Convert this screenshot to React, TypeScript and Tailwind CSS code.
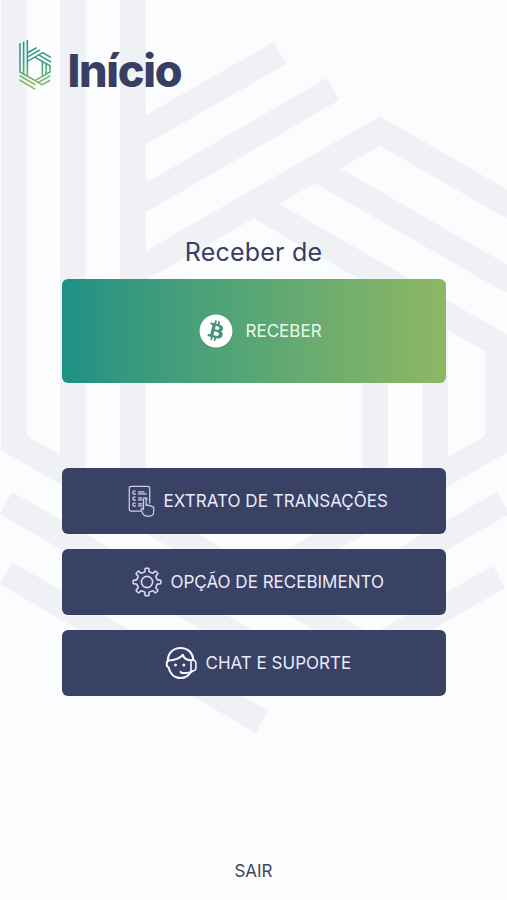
import type { ReactNode } from "react";
import { FaBitcoin } from "react-icons/fa";

// Brand mark, shared by the header logo and the page watermark
const MARK_PATHS = [
  "M14 -20V443L372 649",
  "M73 -45V476",
  "M133 -70V511",
  "M133 137L280 53",
  "M133 205L333 89",
  "M133 273L380 131L512 207",
  "M322 172.5L512 282",
  "M260 207.5L498 344V443L256 582",
  "M375 273V513",
  "M435 308V478",
  "M6 503L262 650",
  "M6 573L262 722",
  "M503 503L310 613",
  "M499 577L372 649",
];

function Mark({ stroke, width }: { stroke: string; width: number }) {
  return (
    <g fill="none" stroke={stroke} strokeWidth={width}>
      {MARK_PATHS.map((d) => (
        <path key={d} d={d} />
      ))}
    </g>
  );
}

function Logo() {
  return (
    <svg className="w-[34px] h-[52px] shrink-0" viewBox="-18 -88 548 838">
      <defs>
        <linearGradient id="logo" gradientUnits="userSpaceOnUse" x1="0" y1="-70" x2="0" y2="730">
          <stop offset="0" stopColor="#2b8f95" />
          <stop offset="0.5" stopColor="#43a085" />
          <stop offset="1" stopColor="#a3c255" />
        </linearGradient>
      </defs>
      <Mark stroke="url(#logo)" width={25} />
    </svg>
  );
}

function StatementIcon() {
  return (
    <svg
      className="w-[27px] h-8 shrink-0"
      viewBox="0 0 27 32"
      fill="none"
      stroke="#c9cee8"
      strokeWidth="1.25"
      strokeLinecap="round"
      strokeLinejoin="round"
    >
      <path d="M12.5 26H3a1.7 1.7 0 0 1-1.7-1.7V3A1.7 1.7 0 0 1 3 1.3h17A1.7 1.7 0 0 1 21.7 3v15" />
      <path d="M7.2 6.2a1.6 1.6 0 1 0 .3 2.6M7.2 12.2a1.6 1.6 0 1 0 .3 2.6M7.2 18.2a1.6 1.6 0 1 0 .3 2.6" />
      <path d="M10.5 6.8h5.5M10.5 8.9h7.8M10.5 12.8h3.5M10.5 14.9h3.5M10.5 18.8h3.5M10.5 20.9h3.5M18.8 12.8v2" />
      <path d="M15.5 24.5V14.2a1.3 1.3 0 0 1 2.6 0v6.2c1-.8 2.3-.5 2.7.4 1-.6 2.2-.2 2.5.7 1.4-.4 2.4.4 2.4 1.8v3.2c0 2.8-1.5 4.5-4 4.5h-2.8c-2 0-3.3-.9-4.1-2.6l-1.5-3.3c-.6-1.6 1.1-2.5 2.2-.6Z" />
    </svg>
  );
}

// Eight teeth, each described as [degrees from its centre, radius]
const TOOTH = [
  [-13.5, 10.4],
  [-9.8, 11.1],
  [-9, 13.1],
  [-6, 13.9],
  [6, 13.9],
  [9, 13.1],
  [9.8, 11.1],
  [13.5, 10.4],
];

function gearPath() {
  const points: string[] = [];
  for (let i = 0; i < 8; i++) {
    for (const [offset, r] of TOOTH) {
      const a = ((i * 45 + offset) * Math.PI) / 180;
      points.push(`${(r * Math.sin(a)).toFixed(2)} ${(-r * Math.cos(a)).toFixed(2)}`);
    }
  }
  return `M${points.join("L")}Z`;
}

function GearIcon() {
  return (
    <svg
      className="w-[30px] h-[30px] shrink-0"
      viewBox="-15 -15 30 30"
      fill="none"
      stroke="#d5daf0"
      strokeWidth="1.6"
      strokeLinejoin="round"
    >
      <path d={gearPath()} />
      <circle r="5.6" />
    </svg>
  );
}

function SupportIcon() {
  return (
    <svg
      className="w-8 h-[34px] shrink-0"
      viewBox="0 0 32 34"
      fill="none"
      stroke="#f4f5fd"
      strokeWidth="2.1"
      strokeLinecap="round"
      strokeLinejoin="round"
    >
      <path d="M2.8 15C2.8 7 8.2 2 15.5 2S28 7 28.2 14" />
      <path d="M3.5 14.5C9 14.3 14.5 12.8 17.8 8.8C18.8 11.8 21.5 14 26 14.3" />
      <path d="M3.3 14.5C1 16 1 20.5 3.6 21.5C5 28 9.5 32 15.5 32C20 32 24 29.5 26 25.5" />
      <path d="M26 14.3h2.3c1.8 0 2.6 1.2 2.6 3v4.4c0 1.8-1 3-2.8 3H26Z" strokeWidth="1.6" />
      <path d="M27.5 25c-1.3 1.6-3 2-5.5 2h-4.5c-1 0-1.8-.6-1.8-1.3" />
      <circle cx="10.5" cy="19" r="1.5" fill="#f4f5fd" stroke="none" />
      <circle cx="18.8" cy="19" r="1.5" fill="#f4f5fd" stroke="none" />
    </svg>
  );
}

function MenuButton({ icon, className, children }: { icon: ReactNode; className: string; children: string }) {
  return (
    <button
      type="button"
      className={`flex h-[66px] w-full items-center rounded-md bg-[#394165] text-[17px] text-[#e9ecfa] ${className}`}
    >
      {icon}
      <span className="pt-[2px] whitespace-nowrap">{children}</span>
    </button>
  );
}

export default function App() {
  return (
    <div className="relative h-[900px] w-[507px] overflow-hidden bg-[#fbfcfe] font-['Inter',sans-serif] text-[#393e63]">
      <svg className="absolute inset-0 h-full w-full" viewBox="0 0 507 900">
        <Mark stroke="#f0f1f5" width={25.5} />
      </svg>

      <div className="relative flex h-full flex-col">
        <header className="flex h-[102px] items-end pl-[18px]">
          <div className="pb-[11px]">
            <Logo />
          </div>
          <h1 className="pb-[4px] pl-[15.5px] text-[45px] leading-[54px] font-extrabold tracking-[-1.3px]">Início</h1>
        </header>

        <main className="flex flex-col px-[61.5px] pt-[132px]">
          <h2 className="h-[45px] text-center text-[25px] leading-[36px] tracking-[0.2px]">Receber de</h2>

          <button
            type="button"
            className="flex h-[104px] w-full items-center rounded-md bg-linear-to-r from-[#1b9184] via-[#58a674] to-[#8eb763] pl-[137px] text-[17px] text-[#e6fbe9]"
          >
            <span className="shrink-0 rounded-full bg-[#43927a]">
              <FaBitcoin className="h-[34px] w-[34px] text-white" />
            </span>
            <span className="pt-px pl-[13px]">RECEBER</span>
          </button>

          <div className="flex flex-col gap-[15px] pt-[85px]">
            <MenuButton icon={<StatementIcon />} className="gap-[9px] pl-[66px] tracking-[0.03px]">
              EXTRATO DE TRANSAÇÕES
            </MenuButton>
            <MenuButton icon={<GearIcon />} className="gap-[9px] pl-[70px]">
              OPÇÃO DE RECEBIMENTO
            </MenuButton>
            <MenuButton icon={<SupportIcon />} className="gap-[9px] pl-[103px]">
              CHAT E SUPORTE
            </MenuButton>
          </div>
        </main>

        <footer className="mt-auto flex justify-center pb-[17px]">
          <button type="button" className="text-[17px] leading-6 text-[#41465e]">
            SAIR
          </button>
        </footer>
      </div>
    </div>
  );
}
